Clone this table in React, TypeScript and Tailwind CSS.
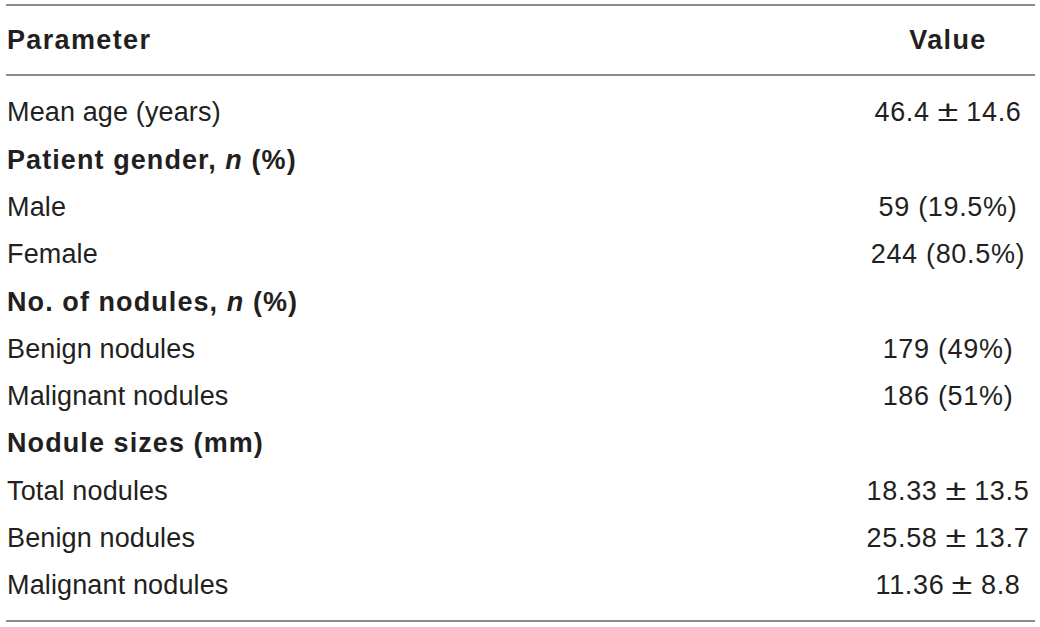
import React from 'react';

type Row = { label: React.ReactNode; value?: React.ReactNode; bold?: boolean };

const pm = (a: string, b: string) => (
  <>
    {a}
    <span className="inline-block mx-[10px] scale-x-[1.3] text-[29px] leading-none">±</span>
    {b}
  </>
);

const rows: Row[] = [
  { label: 'Mean age (years)', value: pm('46.4', '14.6') },
  { label: <>Patient gender, <i>n</i> (%)</>, bold: true },
  { label: 'Male', value: '59 (19.5%)' },
  { label: 'Female', value: '244 (80.5%)' },
  { label: <>No. of nodules, <i>n</i> (%)</>, bold: true },
  { label: 'Benign nodules', value: '179 (49%)' },
  { label: 'Malignant nodules', value: '186 (51%)' },
  { label: 'Nodule sizes (mm)', bold: true },
  { label: 'Total nodules', value: pm('18.33', '13.5') },
  { label: 'Benign nodules', value: pm('25.58', '13.7') },
  { label: 'Malignant nodules', value: pm('11.36', '8.8') },
];

export default function App() {
  return (
    <div
      className="w-[1040px] h-[627px] bg-white pt-[4px] pl-[6px] pr-[5px] text-[#231f20] text-[27px]"
      style={{ fontFamily: '"Liberation Sans", Arial, sans-serif' }}
    >
      <div className="border-t-2 border-b-2 border-[#8c8c8c]">
        <div className="flex items-center h-[70px] pt-[1px] border-b-2 border-[#8c8c8c] font-bold tracking-[0.05em]">
          <div className="flex-1 pl-[1px]">Parameter</div>
          <div className="w-[174px] text-center">Value</div>
        </div>
        <div className="pt-[13px] pb-[11px]">
          {rows.map((r, i) => (
            <div key={i} className="flex items-center h-[47.3px]">
              <div className={`flex-1 pl-[1px] ${r.bold ? 'font-bold tracking-[0.04em]' : 'font-normal tracking-[0.005em]'}`}>
                {r.label}
              </div>
              <div className="w-[174px] text-center tracking-[0.025em]">{r.value}</div>
            </div>
          ))}
        </div>
      </div>
    </div>
  );
}
